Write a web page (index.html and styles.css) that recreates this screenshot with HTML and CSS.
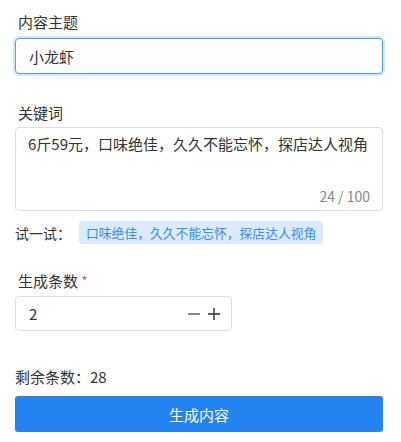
FILE: index.html
```html
<!DOCTYPE html>
<html lang="zh">
<head>
<meta charset="utf-8">
<link rel="stylesheet" href="styles.css">
</head>
<body>
<div class="form">
  <div class="label label-first">内容主题</div>
  <div class="input focused">小龙虾</div>

  <div class="label label-kw">关键词</div>
  <div class="textarea">
    <div class="ta-text">6斤59元，口味绝佳，久久不能忘怀，探店达人视角</div>
    <div class="counter">24 / 100</div>
  </div>

  <div class="try-row">
    <span class="try-label">试一试：</span>
    <span class="tag">口味绝佳，久久不能忘怀，探店达人视角</span>
  </div>

  <div class="label label-count">生成条数 <span class="req">*</span></div>
  <div class="number">
    <span class="num-val">2</span>
    <span class="num-ctrl">
      <svg width="14" height="14" viewBox="0 0 14 14"><path d="M1 7h12" stroke="#555" stroke-width="1.4"/></svg>
      <svg width="14" height="14" viewBox="0 0 14 14"><path d="M1 7h12M7 1v12" stroke="#333" stroke-width="1.4"/></svg>
    </span>
  </div>

  <div class="remain">剩余条数：28</div>
  <div class="btn">生成内容</div>
</div>
</body>
</html>
```

FILE: styles.css
```css
* { box-sizing: border-box; }
html, body { margin: 0; padding: 0; background: #fff; }
body {
  font-family: "Microsoft YaHei", "Noto Sans CJK SC", "Noto Sans", sans-serif;
  font-size: 15px;
  color: #333;
}
.form {
  padding: 0 18px 0 15px;
  width: 401px;
}
.label {
  line-height: 22px;
  padding-left: 3px;
  color: #333;
}
.label-first { margin-top: 11px; margin-bottom: 5px; }
.label-kw { margin-top: 28px; margin-bottom: 3px; }
.label-count { margin-top: 26px; margin-bottom: 4px; }
.req { color: #e0526a; font-size: 13px; vertical-align: top; }

.input {
  height: 36px;
  border: 1px solid #dcdfe6;
  border-radius: 4px;
  padding: 0 13px;
  display: flex;
  align-items: center;
  color: #333;
}
.input.focused {
  border-color: #4a9ff5;
  box-shadow: 0 0 0 2px #d4e7fc;
}
.textarea {
  height: 84px;
  border: 1px solid #dcdfe6;
  border-radius: 4px;
  padding: 5px 12px 0 12px;
  display: flex;
  flex-direction: column;
  justify-content: space-between;
}
.ta-text { line-height: 22px; color: #333; white-space: nowrap; }
.counter {
  align-self: flex-end;
  font-size: 14px;
  color: #888;
  line-height: 20px;
  margin-bottom: 4px;
}
.try-row {
  display: flex;
  align-items: center;
  margin-top: 10px;
  height: 23px;
}
.try-label { font-size: 14px; color: #333; margin-right: 8px; }
.tag {
  background: #dbeafd;
  color: #3b8cf0;
  font-size: 12.8px;
  height: 23px;
  line-height: 23px;
  padding: 0 7px;
  border-radius: 4px;
}
.number {
  width: 217px;
  height: 35px;
  border: 1px solid #dcdfe6;
  border-radius: 4px;
  display: flex;
  align-items: center;
  justify-content: space-between;
  padding: 0 10px 0 13px;
}
.num-val { color: #333; }
.num-ctrl { display: flex; gap: 6px; align-items: center; }
.num-ctrl svg { display: block; }
.remain {
  margin-top: 35px;
  line-height: 22px;
  padding-left: 0;
  color: #333;
}
.btn {
  margin-top: 8px;
  height: 36px;
  background: #2383f0;
  color: #fff;
  border-radius: 3px;
  display: flex;
  align-items: center;
  justify-content: center;
}
```
